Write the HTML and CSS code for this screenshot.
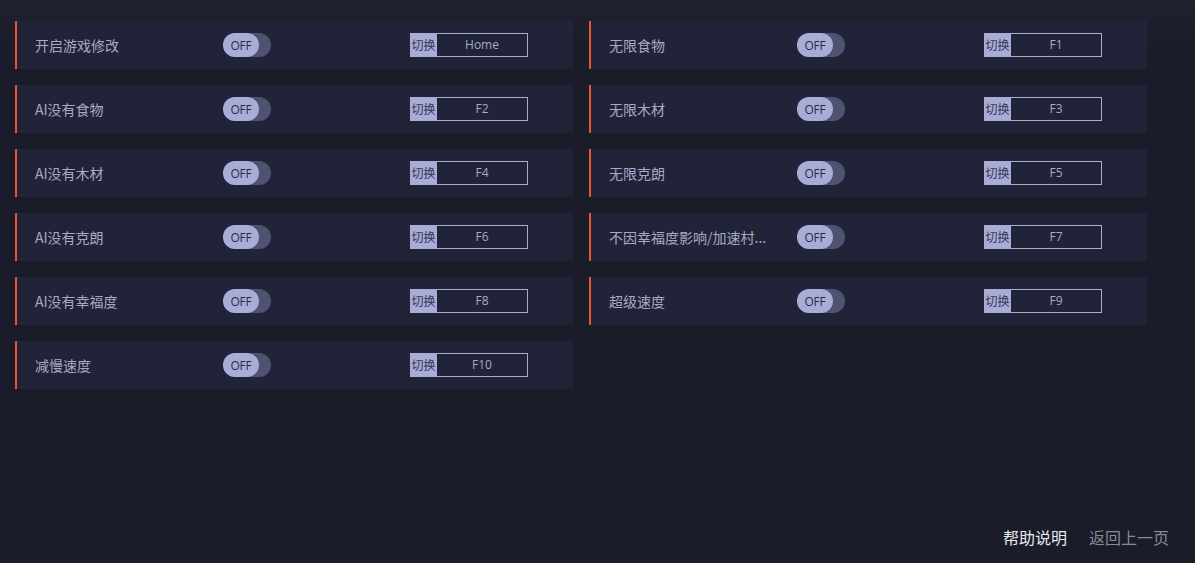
FILE: index.html
```html
<!DOCTYPE html>
<html lang="zh">
<head>
<meta charset="utf-8">
<link rel="stylesheet" href="styles.css">
</head>
<body>
<div class="page">
  <div class="grid">
    <div class="card"><span class="label">开启游戏修改</span><span class="toggle"><span class="knob">OFF</span></span><span class="key"><span class="tag">切换</span><span class="hk">Home</span></span></div>
    <div class="card"><span class="label">无限食物</span><span class="toggle"><span class="knob">OFF</span></span><span class="key"><span class="tag">切换</span><span class="hk">F1</span></span></div>
    <div class="card"><span class="label">AI没有食物</span><span class="toggle"><span class="knob">OFF</span></span><span class="key"><span class="tag">切换</span><span class="hk">F2</span></span></div>
    <div class="card"><span class="label">无限木材</span><span class="toggle"><span class="knob">OFF</span></span><span class="key"><span class="tag">切换</span><span class="hk">F3</span></span></div>
    <div class="card"><span class="label">AI没有木材</span><span class="toggle"><span class="knob">OFF</span></span><span class="key"><span class="tag">切换</span><span class="hk">F4</span></span></div>
    <div class="card"><span class="label">无限克朗</span><span class="toggle"><span class="knob">OFF</span></span><span class="key"><span class="tag">切换</span><span class="hk">F5</span></span></div>
    <div class="card"><span class="label">AI没有克朗</span><span class="toggle"><span class="knob">OFF</span></span><span class="key"><span class="tag">切换</span><span class="hk">F6</span></span></div>
    <div class="card"><span class="label">不因幸福度影响/加速村...</span><span class="toggle"><span class="knob">OFF</span></span><span class="key"><span class="tag">切换</span><span class="hk">F7</span></span></div>
    <div class="card"><span class="label">AI没有幸福度</span><span class="toggle"><span class="knob">OFF</span></span><span class="key"><span class="tag">切换</span><span class="hk">F8</span></span></div>
    <div class="card"><span class="label">超级速度</span><span class="toggle"><span class="knob">OFF</span></span><span class="key"><span class="tag">切换</span><span class="hk">F9</span></span></div>
    <div class="card"><span class="label">减慢速度</span><span class="toggle"><span class="knob">OFF</span></span><span class="key"><span class="tag">切换</span><span class="hk">F10</span></span></div>
  </div>
  <div class="footer">
    <span class="help">帮助说明</span>
    <span class="back">返回上一页</span>
  </div>
</div>
</body>
</html>
```

FILE: styles.css
```css
* { box-sizing: border-box; }
html, body { margin: 0; padding: 0; }
body {
  width: 1195px;
  height: 563px;
  overflow: hidden;
  background: #1a1c29;
  font-family: "Noto Sans CJK SC", "Noto Sans", sans-serif;
}
.page {
  height: 563px;
  display: flex;
  flex-direction: column;
  padding: 21px 0 0 15px;
  background: linear-gradient(180deg, #1f212e 0px, #1b1d2a 40px, #1a1c29 80px);
}
.grid {
  display: grid;
  grid-template-columns: 558px 558px;
  column-gap: 16px;
  row-gap: 16px;
}
.card {
  height: 48px;
  display: flex;
  align-items: center;
  background: #212338;
  border-left: 2px solid #e35a2b;
  padding-left: 18px;
}
.label {
  width: 188px;
  font-size: 14px;
  color: #a7aac6;
  white-space: nowrap;
}
.toggle {
  width: 48px;
  height: 24px;
  border-radius: 12px;
  background: #4f5270;
  display: flex;
  margin-right: 139px;
}
.knob {
  width: 36px;
  height: 24px;
  border-radius: 12px;
  background: #a9acd5;
  color: #2a2c45;
  font-size: 12px;
  font-family: "Open Sans", "Noto Sans", sans-serif;
  display: flex;
  align-items: center;
  justify-content: center;
  letter-spacing: -0.3px;
}
.key {
  width: 118px;
  height: 24px;
  border: 1px solid #a9acd5;
  display: flex;
}
.tag {
  width: 26px;
  background: #a9acd5;
  color: #33354f;
  font-size: 12px;
  line-height: 22px;
  text-align: center;
  margin: -1px 0 -1px -1px;
  height: 24px;
  line-height: 24px;
  width: 27px;
}
.hk {
  flex: 1;
  text-align: center;
  color: #a7aac6;
  font-size: 12px;
  line-height: 22px;
  font-family: "Open Sans", "Noto Sans", sans-serif;
}
.footer {
  margin-top: auto;
  display: flex;
  justify-content: flex-end;
  gap: 22px;
  padding: 0 26px 14px 0;
  font-size: 16px;
}
.help { color: #e8e8ee; }
.back { color: #878a98; }
```
